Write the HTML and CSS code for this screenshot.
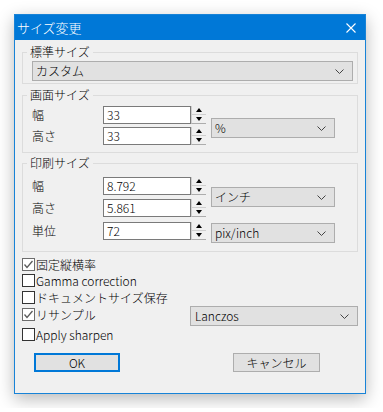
FILE: index.html
```html
<!DOCTYPE html>
<html lang="ja">
<head>
  <meta charset="UTF-8"/>
  <title>サイズ変更</title>
  <link rel="stylesheet" href="styles.css">
</head>
<body>

<div class="dialog">
  <div class="titlebar">
    <span class="title">サイズ変更</span>
    <svg class="close" viewBox="0 0 10 10"><path d="M0.5 0.5 L9.5 9.5 M9.5 0.5 L0.5 9.5" stroke="#fff" stroke-width="1.1" fill="none"/></svg>
  </div>

  <div class="content">
    <fieldset class="group g1">
      <legend>標準サイズ</legend>
      <div class="inner">
        <div class="combo">
          <span>カスタム</span>
          <svg class="chev" viewBox="0 0 9 5"><polyline points="0.5,0.5 4.5,4.5 8.5,0.5" stroke="#444" fill="none"/></svg>
        </div>
      </div>
    </fieldset>

    <fieldset class="group g2">
      <legend>画面サイズ</legend>
      <div class="inner grid">
        <span class="lbl">幅</span>
        <div class="field">33</div>
        <div class="spin"><span class="up"></span><span class="down"></span></div>
        <div class="combo unit r12">
          <span>%</span>
          <svg class="chev" viewBox="0 0 9 5"><polyline points="0.5,0.5 4.5,4.5 8.5,0.5" stroke="#444" fill="none"/></svg>
        </div>
        <span class="lbl">高さ</span>
        <div class="field">33</div>
        <div class="spin"><span class="up"></span><span class="down"></span></div>
      </div>
    </fieldset>

    <fieldset class="group g3">
      <legend>印刷サイズ</legend>
      <div class="inner grid">
        <span class="lbl">幅</span>
        <div class="field">8.792</div>
        <div class="spin"><span class="up"></span><span class="down"></span></div>
        <div class="combo unit r12">
          <span>インチ</span>
          <svg class="chev" viewBox="0 0 9 5"><polyline points="0.5,0.5 4.5,4.5 8.5,0.5" stroke="#444" fill="none"/></svg>
        </div>
        <span class="lbl">高さ</span>
        <div class="field">5.861</div>
        <div class="spin"><span class="up"></span><span class="down"></span></div>
        <span class="lbl">単位</span>
        <div class="field">72</div>
        <div class="spin"><span class="up"></span><span class="down"></span></div>
        <div class="combo unit r3">
          <span>pix/inch</span>
          <svg class="chev" viewBox="0 0 9 5"><polyline points="0.5,0.5 4.5,4.5 8.5,0.5" stroke="#444" fill="none"/></svg>
        </div>
      </div>
    </fieldset>

    <div class="checks">
      <div class="check h16">
        <span class="box on"><svg viewBox="0 0 11 11"><polyline points="1.5,5.5 4,8.5 9.5,2" stroke="#5a5a5a" stroke-width="1.3" fill="none"/></svg></span>
        <span>固定縦横率</span>
      </div>
      <div class="check">
        <span class="box"></span>
        <span>Gamma correction</span>
      </div>
      <div class="check">
        <span class="box"></span>
        <span>ドキュメントサイズ保存</span>
      </div>
      <div class="check h20">
        <span class="box on"><svg viewBox="0 0 11 11"><polyline points="1.5,5.5 4,8.5 9.5,2" stroke="#5a5a5a" stroke-width="1.3" fill="none"/></svg></span>
        <span>リサンプル</span>
        <div class="combo resample">
          <span>Lanczos</span>
          <svg class="chev" viewBox="0 0 9 5"><polyline points="0.5,0.5 4.5,4.5 8.5,0.5" stroke="#444" fill="none"/></svg>
        </div>
      </div>
      <div class="check">
        <span class="box"></span>
        <span>Apply sharpen</span>
      </div>
    </div>

    <div class="buttons">
      <div class="btn default">OK</div>
      <div class="btn">キャンセル</div>
    </div>
  </div>
</div>

</body>
</html>
```

FILE: styles.css
```css
* {
  box-sizing: border-box;
}
body {
  margin: 0;
  padding: 14px;
  background: #fff;
  font-family: "Noto Sans CJK JP", "Noto Sans", sans-serif;
  font-size: 12px;
  font-weight: 300;
  color: #000;
}
.dialog {
  width: 352px;
  height: 380px;
  border: 1px solid #1883d7;
  background: #f0f0f0;
  box-shadow: 0 5px 16px rgba(0, 0, 0, 0.28);
  display: flex;
  flex-direction: column;
}
.titlebar {
  height: 25px;
  flex: none;
  background: #0078d7;
  color: #fff;
  display: flex;
  align-items: center;
  justify-content: space-between;
  padding: 0 9px 0 2px;
}
.title {
  font-size: 13px;
  line-height: 1;
}
.close {
  width: 10px;
  height: 10px;
}
.content {
  padding: 0 7px;
}
.group {
  margin: 0;
  padding: 0;
  border: 1px solid #dcdcdc;
  min-width: 0;
}
.group legend {
  margin-left: 4px;
  padding: 0 3px;
  line-height: 14px;
  height: 14px;
}
.g1 {
  margin-top: 5px;
}
.g1 .inner {
  padding: 2px 4px 2px 9px;
}
.g2 {
  margin-top: 4px;
}
.g2 .inner {
  padding: 4px 0 7px 9px;
  grid-template-rows: 18px 18px;
  row-gap: 3px;
}
.g3 {
  margin-top: 3px;
}
.g3 .inner {
  padding: 7px 0 11px 9px;
  grid-template-rows: 22px 23px 18px;
}
.grid {
  display: grid;
  grid-template-columns: 71px 88px 15px 129px;
  align-items: start;
}
.lbl {
  line-height: 18px;
}
.field {
  height: 18px;
  background: #fff;
  border: 1px solid #7a7a7a;
  padding-left: 3px;
  line-height: 16px;
}
.spin {
  height: 18px;
  display: flex;
  flex-direction: column;
  border-bottom: 1px solid #adadad;
  border-left: 1px solid #cfcfcf;
}
.spin span {
  flex: 1;
  display: flex;
  align-items: center;
  justify-content: center;
}
.spin .up {
  border-bottom: 1px solid #cfcfcf;
}
.spin span::before {
  content: "";
  border-left: 3.5px solid transparent;
  border-right: 3.5px solid transparent;
}
.spin .up::before {
  border-bottom: 4px solid #000;
}
.spin .down::before {
  border-top: 4px solid #000;
}
.combo {
  height: 20px;
  background: #e1e1e1;
  border: 1px solid #adadad;
  display: flex;
  align-items: center;
  justify-content: space-between;
  padding: 0 8px 0 3px;
  line-height: 18px;
}
.chev {
  width: 9px;
  height: 5px;
}
.unit {
  grid-column: 4;
  margin-left: 5px;
  width: 124px;
}
.r12 {
  grid-row: 1 / 3;
  margin-top: 12px;
}
.g3 .r12 {
  margin-top: 10px;
}
.r3 {
  grid-row: 3;
  margin-top: 1px;
}
.checks {
  margin-top: 4px;
  display: flex;
  flex-direction: column;
}
.check {
  height: 17px;
  display: flex;
  align-items: flex-start;
  gap: 1px;
  line-height: 17px;
}
.check.h16 {
  height: 16px;
}
.check.h20 {
  height: 20px;
}
.box {
  width: 13px;
  height: 13px;
  margin-top: 2px;
  background: #fff;
  border: 1px solid #333;
  display: flex;
}
.box.on {
  border-color: #6d6d6d;
}
.box svg {
  width: 11px;
  height: 11px;
}
.resample {
  margin-left: auto;
  width: 168px;
  padding-left: 4px;
}
.buttons {
  margin-top: 10px;
  padding-left: 12px;
  display: flex;
  gap: 113px;
}
.btn {
  width: 87px;
  height: 19px;
  background: #e1e1e1;
  border: 1px solid #adadad;
  text-align: center;
  line-height: 17px;
}
.btn.default {
  width: 86px;
  border: 2px solid #0078d7;
  line-height: 15px;
}
```
